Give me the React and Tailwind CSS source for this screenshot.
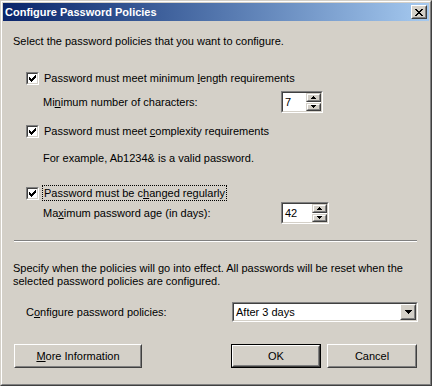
import React from "react";

const F = { fontFamily: '"Liberation Sans", Arial, sans-serif' };

function Pixels({ rows, color = "#000" }) {
  const h = rows.length;
  const w = rows[0].length;
  const rects = [];
  rows.forEach((r, y) =>
    r.split("").forEach((c, x) => {
      if (c === "X") rects.push(<rect key={`${x}-${y}`} x={x} y={y} width="1" height="1" fill={color} />);
    })
  );
  return (
    <svg width={w} height={h} viewBox={`0 0 ${w} ${h}`} shapeRendering="crispEdges">
      {rects}
    </svg>
  );
}

const CLOSE = ["XX....XX", ".XX..XX.", "..XXXX..", "...XX...", "..XXXX..", ".XX..XX.", "XX....XX"];
const CHECK = ["......X", ".....XX", "X...XXX", "XX.XXX.", "XXXXX..", ".XXX...", "..X...."];
const DOWN7 = ["XXXXXXX", ".XXXXX.", "..XXX..", "...X..."];
const UP5 = ["..X..", ".XXX.", "XXXXX"];
const DOWN5 = ["XXXXX", ".XXX.", "..X.."];

function Raised({ className = "", children }) {
  return (
    <div className={"border border-t-white border-l-white border-b-[#404040] border-r-[#404040] " + className}>
      <div className="flex h-full w-full items-center justify-center border border-t-[#d4d0c8] border-l-[#d4d0c8] border-b-[#808080] border-r-[#808080]">
        {children}
      </div>
    </div>
  );
}

function SpinBtn({ children }) {
  return (
    <div className="flex-1 border border-t-[#d4d0c8] border-l-[#d4d0c8] border-b-[#404040] border-r-[#404040] bg-[#d4d0c8]">
      <div className="flex h-full w-full items-center justify-center border border-t-white border-l-white border-b-[#808080] border-r-[#808080]">
        {children}
      </div>
    </div>
  );
}

function Sunken({ className = "", children }) {
  return (
    <div className={"border border-t-[#808080] border-l-[#808080] border-b-white border-r-white " + className}>
      <div className="flex h-full w-full border border-t-[#404040] border-l-[#404040] border-b-[#d4d0c8] border-r-[#d4d0c8] bg-white">
        {children}
      </div>
    </div>
  );
}

function Spinner({ value, className }) {
  return (
    <Sunken className={"h-[22px] " + className}>
      <div className="flex flex-1 items-center pl-[2px] text-[11px] leading-none text-black">{value}</div>
      <div className="flex w-[15px] flex-col gap-[1px]">
        <SpinBtn>
          <Pixels rows={UP5} />
        </SpinBtn>
        <SpinBtn>
          <Pixels rows={DOWN5} />
        </SpinBtn>
      </div>
    </Sunken>
  );
}

function Checkbox() {
  return (
    <div className="h-[13px] w-[13px] shrink-0 border border-t-[#808080] border-l-[#808080] border-b-white border-r-white">
      <div className="flex h-full w-full items-center justify-center border border-t-[#404040] border-l-[#404040] border-b-[#d4d0c8] border-r-[#d4d0c8] bg-white">
        <Pixels rows={CHECK} />
      </div>
    </div>
  );
}

export default function App() {
  return (
    <div className="h-[386px] w-[432px] text-[11px] text-black" style={F}>
      <div className="h-full w-full border border-t-[#d4d0c8] border-l-[#d4d0c8] border-b-[#404040] border-r-[#404040] bg-[#d4d0c8]">
        <div className="flex h-full w-full flex-col border border-t-white border-l-white border-b-[#808080] border-r-[#808080] p-[1px]">
          {/* Title bar */}
          <div className="flex h-[18px] shrink-0 items-center justify-between bg-gradient-to-r from-[#0a246a] to-[#a6caf0] pl-[2px] pr-[2px]">
            <span className="text-[11px] font-bold leading-none text-white">Configure Password Policies</span>
            <Raised className="h-[14px] w-[16px] bg-[#d4d0c8]">
              <Pixels rows={CLOSE} />
            </Raised>
          </div>

          {/* Content */}
          <div className="flex flex-col pl-[10px] pt-[1px]">
            <div className="mt-[12px] flex h-[14px] items-center">Select the password policies that you want to configure.</div>

            <div className="ml-[13px] mt-[22px] flex h-[16px] items-center gap-[4px]">
              <Checkbox />
              <span className="pl-[1px]">
                Password must meet minimum <u>l</u>ength requirements
              </span>
            </div>

            <div className="mt-[5px] flex h-[22px] items-center">
              <span className="w-[268px] pl-[30px]">
                Mi<u>n</u>imum number of characters:
              </span>
              <Spinner value="7" className="w-[42px]" />
            </div>

            <div className="ml-[13px] mt-[10px] flex h-[16px] items-center gap-[4px]">
              <Checkbox />
              <span className="pl-[1px]">
                Password must meet <u>c</u>omplexity requirements
              </span>
            </div>

            <div className="mt-[12px] flex h-[14px] items-center pl-[30px]">For example, Ab1234&amp; is a valid password.</div>

            <div className="ml-[13px] mt-[20px] flex h-[16px] items-center gap-[3px]">
              <Checkbox />
              <span className="border border-dotted border-black px-[1px] leading-[14px]">
                Password must be c<u>h</u>anged regularly
              </span>
            </div>

            <div className="mt-[1px] flex h-[22px] items-center">
              <span className="w-[268px] pl-[30px]">
                Ma<u>x</u>imum password age (in days):
              </span>
              <Spinner value="42" className="w-[48px]" />
            </div>

            <div className="ml-[1px] mt-[16px] h-[2px] w-[403px] border-t border-t-[#808080] border-b border-b-white" />

            <div className="mt-[20px] flex flex-col leading-[13px]">
              <span>Specify when the policies will go into effect. All passwords will be reset when the</span>
              <span>selected password policies are configured.</span>
            </div>

            <div className="mt-[14px] flex h-[20px] items-center">
              <span className="w-[219px] pl-[13px]">
                C<u>o</u>nfigure password policies:
              </span>
              <Sunken className="h-[20px] w-[186px]">
                <div className="flex flex-1 items-center pl-[2px]">After 3 days</div>
                <Raised className="h-[16px] w-[16px] bg-[#d4d0c8]">
                  <Pixels rows={DOWN7} />
                </Raised>
              </Sunken>
            </div>

            <div className="mt-[22px] flex h-[24px] items-stretch">
              <Raised className="ml-[1px] w-[128px]">
                <span>
                  <u>M</u>ore Information
                </span>
              </Raised>
              <div className="ml-[89px] w-[90px] border border-black">
                <Raised className="h-full w-full">
                  <span>OK</span>
                </Raised>
              </div>
              <Raised className="ml-[6px] w-[90px]">
                <span>Cancel</span>
              </Raised>
            </div>
          </div>
        </div>
      </div>
    </div>
  );
}
